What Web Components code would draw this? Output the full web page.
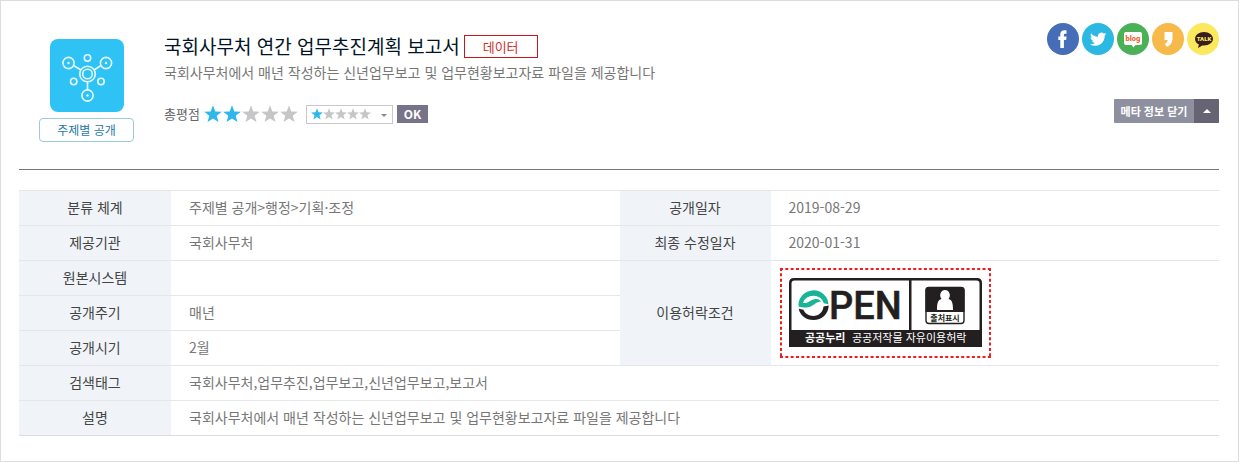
<!DOCTYPE html>
<html lang="ko">
<head>
<meta charset="utf-8">
<title>국회사무처 연간 업무추진계획 보고서</title>
<style>
body { margin: 0; background: #fff; font-family: "Noto Sans CJK KR", "Noto Sans", sans-serif; }
</style>
</head>
<body>
<dataset-page>
  <dataset-header slot="header">
    <category-badge slot="badge">주제별 공개</category-badge>
    <span slot="title">국회사무처 연간 업무추진계획 보고서</span>
    <span slot="type">데이터</span>
    <span slot="summary">국회사무처에서 매년 작성하는 신년업무보고 및 업무현황보고자료 파일을 제공합니다</span>
    <rating-form slot="rating" score="2"></rating-form>
    <share-links slot="share"></share-links>
    <meta-toggle slot="toggle">메타 정보 닫기</meta-toggle>
  </dataset-header>
  <meta-table></meta-table>
</dataset-page>

<script>
const define = (name, html, setup) => {
  const template = document.createElement('template');
  template.innerHTML = html;
  customElements.define(name, class extends HTMLElement {
    constructor() {
      super();
      this.attachShadow({ mode: 'open' }).append(template.content.cloneNode(true));
    }
    connectedCallback() { if (setup) setup(this, this.shadowRoot); }
  });
};

define('dataset-page', `
<style>
:host { display: block; box-sizing: border-box; min-height: 100vh; border: 1px solid #ddd; padding: 0 19px 24px 18px; }
</style>
<slot name="header"></slot>
<slot></slot>`);

define('dataset-header', `
<style>
:host { display: flex; box-sizing: border-box; min-height: 169px; margin-bottom: 20px; padding: 22px 0 0 20px; border-bottom: 1px solid #77767c; }
.info { flex: 1; margin-left: 30px; padding-top: 9px; }
.heading { display: flex; align-items: center; gap: 4px; }
h1 { margin: 0; font-size: 19px; line-height: 28px; font-weight: 400; color: #011426; }
.type { box-sizing: border-box; width: 74px; border: 1px solid #c9151e; font-size: 13px; line-height: 21px; text-align: center; color: #d0312d; }
p { margin: 0 0 20px; font-size: 14px; line-height: 24px; color: #777; }
.side { display: flex; flex-direction: column; align-items: flex-end; gap: 44px; }
.badge { padding-top: 16px; }
</style>
<div class="badge"><slot name="badge"></slot></div>
<div class="info">
  <div class="heading"><h1><slot name="title"></slot></h1><span class="type"><slot name="type"></slot></span></div>
  <p><slot name="summary"></slot></p>
  <slot name="rating"></slot>
</div>
<div class="side"><slot name="share"></slot><slot name="toggle"></slot></div>`);

define('category-badge', `
<style>
:host { display: flex; flex-direction: column; align-items: center; gap: 6px; width: 95px; }
svg { display: block; }
span { box-sizing: border-box; width: 100%; border: 1px solid #9bcbd8; border-radius: 4px; font-size: 12px; line-height: 22px; text-align: center; color: #1f79a8; }
</style>
<svg width="74" height="73" viewBox="0 0 74 73" fill="none" stroke="#e6f8ff" stroke-width="1.6" aria-hidden="true">
  <rect width="74" height="73" rx="8" fill="#2fc3f5" stroke="none"/>
  <path d="M23.5 26.5 31 31M51 26.5 44 31M37.500 43v8"/>
  <circle cx="18.500" cy="24" r="5.600"/><circle cx="56" cy="24" r="5.600"/><circle cx="37.500" cy="56.500" r="5.600"/>
  <circle cx="37.500" cy="35" r="7.800"/><circle cx="37.500" cy="35" r="4.800"/>
  <circle cx="37.500" cy="19" r="3.200"/><circle cx="23.700" cy="42.500" r="3.200"/><circle cx="51" cy="42.500" r="3.200"/>
  <g fill="#e6f8ff" stroke="none"><circle cx="18.500" cy="24" r="1.200"/><circle cx="56" cy="24" r="1.200"/><circle cx="37.500" cy="56.500" r="1.200"/></g>
</svg>
<span><slot></slot></span>`);

define('star-row', `
<style>
:host { display: flex; gap: var(--star-gap, 1px); }
svg { display: block; width: var(--star-size, 18px); height: var(--star-size, 18px); fill: #c6c6c8; }
svg.on { fill: #2fb6ea; }
</style>`, (host, root) => {
  const score = Number(host.getAttribute('score'));
  for (let i = 0; i < 5; i++) {
    root.innerHTML += `<svg class="${i < score ? 'on' : ''}" viewBox="0 0 18 18" aria-hidden="true"><path d="M9 .3l2.300 6.100 6.500.300-5.100 4 1.800 6.400L9 13.500l-5.500 3.600 1.800-6.400-5.100-4 6.500-.300z"/></svg>`;
  }
});

define('rating-form', `
<style>
:host { display: flex; align-items: center; font-size: 13px; line-height: 20px; color: #666; }
.total { margin: 0 8px 0 4px; }
.picker { position: relative; margin-right: 4px; }
select { display: block; box-sizing: border-box; width: 87px; height: 19px; appearance: none; border: 1px solid #c8c8c8; border-radius: 0; background: #fff; }
.choice { position: absolute; left: 5px; top: 3px; --star-size: 12px; --star-gap: 0px; pointer-events: none; }
.arrow { position: absolute; right: 6px; top: 9px; pointer-events: none; }
button { width: 31px; height: 18px; padding: 0; border: 0; background: #77748a; color: #fff; font: 700 12px/18px "Noto Sans CJK KR", "Noto Sans", sans-serif; }
</style>
<label for="score">총평점</label>
<span class="total"></span>
<span class="picker">
  <select id="score">
    <option value="1" aria-label="1점"></option><option value="2" aria-label="2점"></option><option value="3" aria-label="3점"></option><option value="4" aria-label="4점"></option><option value="5" aria-label="5점"></option>
  </select>
  <star-row class="choice" score="1"></star-row>
  <svg class="arrow" width="6" height="3" viewBox="0 0 6 3" aria-hidden="true"><path d="M0 0h6L3 3z" fill="#888"/></svg>
</span>
<button type="button">OK</button>`, (host, root) => {
  root.querySelector('.total').innerHTML = `<star-row score="${host.getAttribute('score')}"></star-row>`;
});

define('share-links', `
<style>
:host { display: flex; gap: 3px; }
a, svg { display: block; }
text { font-family: Roboto, sans-serif; font-weight: 900; }
</style>
<a href="#facebook" aria-label="페이스북"><svg width="32" height="32" viewBox="0 0 32 32"><circle cx="16" cy="16" r="16" fill="#466eb8"/><path d="M13.300 25v-8h-2v-3.600h2v-2.200c0-2.700 1.700-4 4.200-4h2v3.600h-1.300c-1 0-1.300.500-1.300 1.300v1.300h2.700l-.400 3.600h-2.300v8z" fill="#fff"/></svg></a>
<a href="#twitter" aria-label="트위터"><svg width="32" height="32" viewBox="0 0 32 32"><circle cx="16" cy="16" r="16" fill="#2bb8e3"/><path transform="translate(8 8) scale(.68)" d="M23.950 4.570a10 10 0 0 1-2.820.770 4.960 4.960 0 0 0 2.160-2.720c-.950.550-2 .950-3.130 1.180a4.920 4.920 0 0 0-8.380 4.480C7.690 8.090 4.070 6.130 1.640 3.160a4.820 4.820 0 0 0-.660 2.480c0 1.710.870 3.210 2.190 4.100a4.900 4.900 0 0 1-2.230-.620v.060a4.920 4.920 0 0 0 3.950 4.830 5 5 0 0 1-2.210.080 4.940 4.940 0 0 0 4.600 3.420A9.870 9.870 0 0 1 0 19.540a14 14 0 0 0 7.550 2.210c9.050 0 14-7.500 14-13.980 0-.210 0-.420-.020-.630a9.940 9.940 0 0 0 2.460-2.550z" fill="#fff"/></svg></a>
<a href="#blog" aria-label="블로그"><svg width="32" height="32" viewBox="0 0 32 32"><circle cx="16" cy="16" r="16" fill="#4bb159"/><path d="M9 9h14q2 0 2 2v9q0 2-2 2h-4.500L16.500 24.500 14.500 22H9q-2 0-2-2v-9q0-2 2-2z" fill="#fff"/><text x="16" y="18" text-anchor="middle" font-size="7.500" fill="#ed6a35">blog</text></svg></a>
<a href="#story" aria-label="카카오스토리"><svg width="32" height="32" viewBox="0 0 32 32"><circle cx="16" cy="16" r="16" fill="#f6b94a"/><path d="M12.500 9h8v6c0 4.500-2 7.500-5.500 8.700l-2.300-2.700c2-.800 2.900-2.200 3-4h-3.200z" fill="#fff"/></svg></a>
<a href="#talk" aria-label="카카오톡"><svg width="32" height="32" viewBox="0 0 32 32"><circle cx="16" cy="16" r="16" fill="#fbe85c"/><path d="M17 9c5 0 9 3 9 6.800s-4 6.700-9 6.700l-1.700-.100L11 25l.900-3.400C9.500 20.400 8 18.300 8 15.800 8 12 12 9 17 9z" fill="#381e1f"/><text x="17" y="18" text-anchor="middle" font-size="6" fill="#fbe85c">TALK</text></svg></a>`);

define('meta-toggle', `
<style>
:host { display: block; }
button { display: flex; height: 24px; padding: 0; border: 0; border-radius: 1px; overflow: hidden; background: #8f909f; color: #fff; font: 700 11px/24px "Noto Sans CJK KR", "Noto Sans", sans-serif; }
.label { width: 80px; text-align: center; }
.icon { display: flex; align-items: center; justify-content: center; width: 25px; height: 24px; background: #666472; }
</style>
<button type="button" aria-expanded="true"><span class="label"><slot></slot></span><span class="icon"><svg width="8" height="4" viewBox="0 0 8 4" aria-hidden="true"><path d="M0 4h8L4 0z" fill="#fff"/></svg></span></button>`);

define('open-license', `
<style>
:host { display: block; }
svg { display: block; }
text { font-family: "Noto Sans CJK KR", sans-serif; }
.pen { font-family: Roboto, sans-serif; font-weight: 500; font-size: 38px; }
</style>
<svg width="211" height="90" viewBox="0 0 211 90" role="img" aria-label="공공누리 출처표시">
  <path d="M0 1h211M0 89h211M1 0v90M210 0v90" fill="none" stroke="#ed1c24" stroke-width="2" stroke-dasharray="3 2.330"/>
  <path d="M10.500 79V15q0-4.500 4.500-4.500h182q4.500 0 4.500 4.500v64z" fill="#fff"/>
  <path d="M9 79V15q0-5 5-5h183q5 0 5 5v64zM11.500 62h188V15.500q0-3-3-3h-182q-3 0-3 3z" fill="#231f20" fill-rule="evenodd"/>
  <path d="M129 11h2.500v52H129z" fill="#231f20"/>
  <path d="M18.500 38.500A15 15 0 0 1 48.500 36.300L43.800 35.200A10.800 10 0 0 0 23 34.800C28 36.500 31 30.500 36.500 31c2.500.200 3.500 1.500 5.200 2.500C36 33 34.500 37.500 29 39c-4 1-7.500.500-10.500-.500z" fill="#19b497"/>
  <path d="M18.700 40.800l4.800.900c1.600 4 5.400 6.200 9.800 6.200 5.500 0 9.700-3.800 10.200-9.400l5.200-1C48.500 46 42 52 33.300 52c-7.500 0-13.300-4.600-14.600-11.200z" fill="#231f20"/>
  <text class="pen" x="49" y="51" fill="#231f20" stroke="#231f20" stroke-width=".5">PEN</text>
  <rect x="146" y="19.500" width="38" height="36" rx="3" fill="#fff" stroke="#231f20" stroke-width="1.400"/>
  <path d="M145.500 44V22q0-3 3-3h33q3 0 3 3v22z" fill="#231f20"/>
  <path d="M157 42c0-6 .500-10 4.500-11-3-4-.500-9 3.500-9s6.500 5 3.500 9c4 1 4.500 5 4.500 11z" fill="#fff"/>
  <text x="165" y="53" text-anchor="middle" font-size="8" font-weight="700" fill="#231f20">출처표시</text>
  <text x="25" y="74" font-size="11" font-weight="700" fill="#fff">공공누리</text>
  <text x="72" y="74" font-size="11" fill="#fff">공공저작물 자유이용허락</text>
</svg>`);

define('meta-table', `
<style>
:host { display: block; }
table { width: 100%; table-layout: fixed; border-collapse: collapse; border-top: 1px solid #ddd; border-bottom: 1px solid #ddd; font-size: 14px; line-height: 20px; }
.head { width: 152px; }
.head-end { width: 151px; }
th, td { height: 32px; padding: 0 0 2px; border-top: 1px solid #e5e6e7; }
th { background: #f0f4f8; color: #444; font-weight: 400; }
td { padding-left: 18px; color: #777; }
td.mark { padding: 0 0 0 9px; }
</style>
<table>
  <colgroup><col class="head"><col><col class="head-end"><col></colgroup>
  <tbody>
  <tr><th scope="row">분류 체계</th><td>주제별 공개&gt;행정&gt;기획·조정</td><th scope="row">공개일자</th><td>2019-08-29</td></tr>
  <tr><th scope="row">제공기관</th><td>국회사무처</td><th scope="row">최종 수정일자</th><td>2020-01-31</td></tr>
  <tr><th scope="row">원본시스템</th><td></td><th scope="row" rowspan="3">이용허락조건</th><td class="mark" rowspan="3"><open-license></open-license></td></tr>
  <tr><th scope="row">공개주기</th><td>매년</td></tr>
  <tr><th scope="row">공개시기</th><td>2월</td></tr>
  <tr><th scope="row">검색태그</th><td colspan="3">국회사무처,업무추진,업무보고,신년업무보고,보고서</td></tr>
  <tr><th scope="row">설명</th><td colspan="3">국회사무처에서 매년 작성하는 신년업무보고 및 업무현황보고자료 파일을 제공합니다</td></tr>
  </tbody>
</table>`);
</script>
</body>
</html>
